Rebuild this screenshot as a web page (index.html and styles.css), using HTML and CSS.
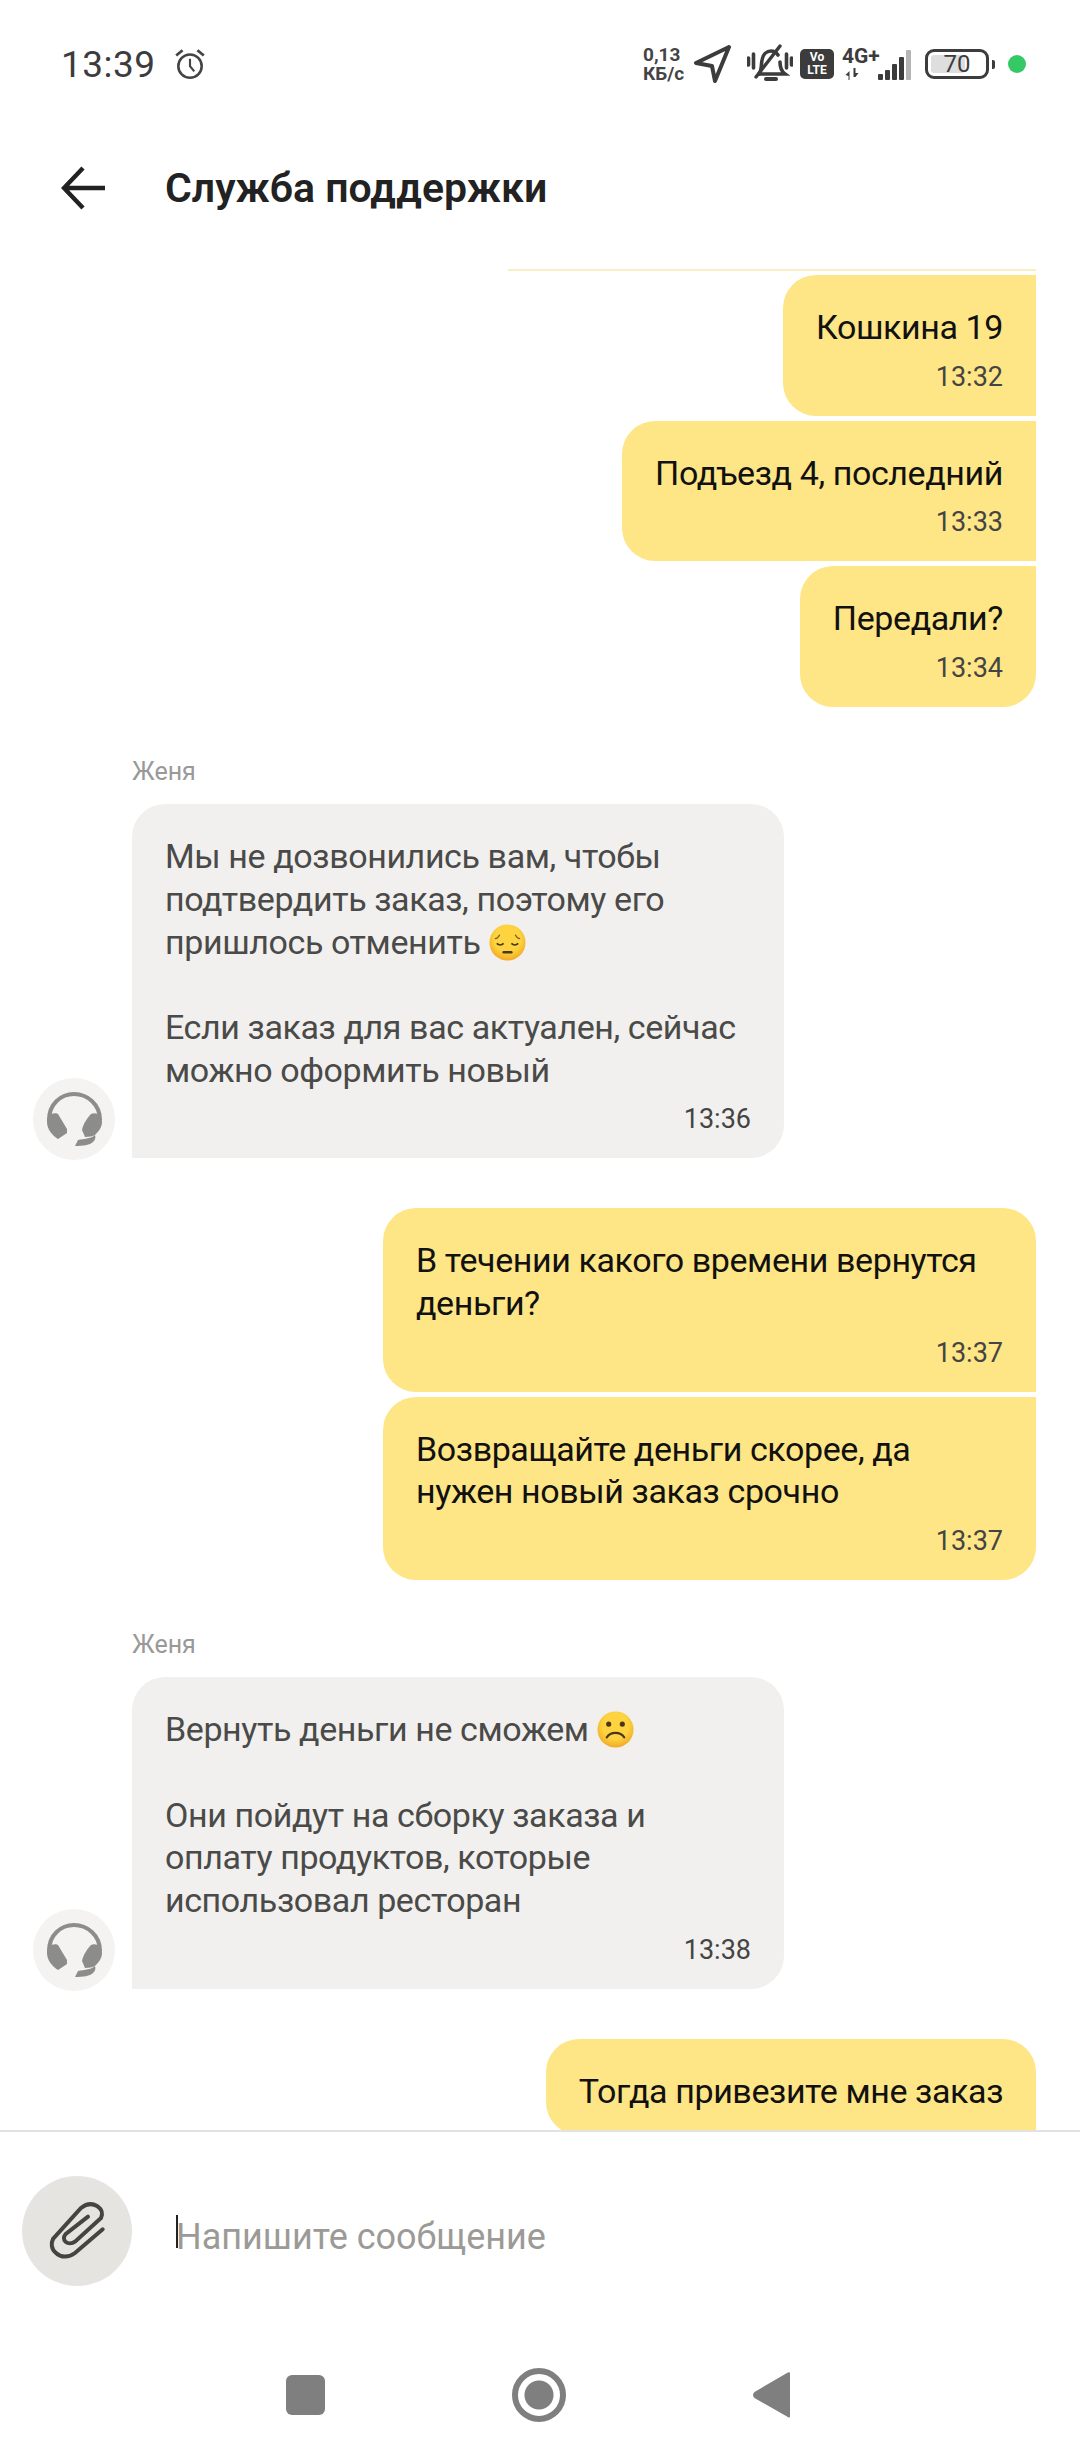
FILE: index.html
```html
<!DOCTYPE html>
<html lang="ru">

<head>
    <meta charset="UTF-8">
    <meta name="viewport" content="width=device-width, initial-scale=1.0">
    <title>Служба поддержки</title>
    <link rel="stylesheet" href="styles.css">
</head>

<body>
    <div class="page">
        <!-- Status bar -->
        <div class="status-bar">
            <div class="status-left">
                <span class="clock">13:39</span>
                <svg class="alarm" viewBox="0 0 32 32" fill="none" stroke="#444" stroke-width="2.4">
                    <circle cx="16" cy="18" r="11"></circle>
                    <path d="M16 11v7l4 5" stroke-width="2"></path>
                    <path d="M3 8l6-5M29 8l-6-5" stroke-width="2.6"></path>
                </svg>
            </div>
            <div class="status-right">
                <div class="speed"><span>0,13</span><span>КБ/с</span></div>
                <svg class="location" viewBox="0 0 38 38" fill="none" stroke="#3c3c3c" stroke-width="4" stroke-linejoin="round">
                    <path d="M35 2L2 18l16 3 3 15z"></path>
                </svg>
                <svg class="bell" viewBox="0 0 46 40" fill="none" stroke="#3c3c3c" stroke-width="3.6" stroke-linecap="round">
                    <path d="M12 30c3-4 2-9 3-14 1-6 5-9 9-9 3 0 5 1 7 4"></path>
                    <path d="M33 18c0 5 1 9 5 12H12"></path>
                    <path d="M33 2L9 33" stroke-width="3.4"></path>
                    <path d="M1.5 14v7M6.5 10v14M39.500 10v14M44.500 14v7"></path>
                    <path d="M19 35h10" stroke-width="4"></path>
                </svg>
                <div class="volte"><span>Vo</span><span>LTE</span></div>
                <div class="network">
                    <span class="net-type">4G+</span>
                    <div class="net-arrows">
                        <svg class="arrows" viewBox="0 0 14 12" fill="#3c3c3c">
                            <path d="M0 7l4-4v9H3V8zM8 0h2v5l3 0-3 4H8z"></path>
                        </svg>
                    </div>
                </div>
                <div class="signal">
                    <i class="bar bar-1"></i>
                    <i class="bar bar-2"></i>
                    <i class="bar bar-3"></i>
                    <i class="bar bar-4"></i>
                    <i class="bar bar-5"></i>
                </div>
                <div class="battery">
                    <div class="battery-body">
                        <div class="battery-level"></div>
                        <span class="battery-text">70</span>
                    </div>
                    <div class="battery-nub"></div>
                </div>
                <div class="dot"></div>
            </div>
        </div>

        <!-- Header -->
        <div class="header">
            <svg class="back" viewBox="0 0 44 44" fill="none" stroke="#222" stroke-width="4.4">
                <path d="M22 2L3 22l19 20M3 22h41"></path>
            </svg>
            <div class="title">Служба поддержки</div>
        </div>

        <!-- Chat -->
        <div class="chat">
            <div class="peek"></div>
            <div class="group group-out">
                <div class="bubble out flat-top">
                    <div class="text">Кошкина 19</div>
                    <div class="time">13:32</div>
                </div>
                <div class="bubble out flat-top">
                    <div class="text">Подъезд 4, последний</div>
                    <div class="time">13:33</div>
                </div>
                <div class="bubble out flat-top end">
                    <div class="text">Передали?</div>
                    <div class="time">13:34</div>
                </div>
            </div>

            <div class="group group-in">
                <div class="name">Женя</div>
                <div class="in-row">
                    <div class="avatar">
                        <svg viewBox="0 0 82 82">
                            <path d="M16 42C16 26 28 16 41 16S67 26 67 42" fill="none" stroke="#8c8c8a" stroke-width="4"></path>
                            <path class="ear" d="M14 44c0-5 2-8 4-8 3-1 6-1 7 0l9 15 0 4-9 6c-6-4-11-10-11-17z"></path>
                            <path class="ear" d="M69 44c0-5-2-8-4-8-3-1-5-1-7 0-3 3-8 10-9 16l3 7c4 0 8-1 10-2 4-4 7-8 7-13z"></path>
                            <path class="ear" d="M62 57c-3 3-10 4-17 5l-3 6c8 0 15-1 18-4 2-2 3-4 2-7z"></path>
                        </svg>
                    </div>
                    <div class="bubble in">
                        <div class="text">Мы не дозвонились вам, чтобы подтвердить заказ, поэтому его пришлось отменить
                            <svg class="emoji" viewBox="0 0 38 38">
                                <defs>
                                    <radialGradient id="skin" cx="50%" cy="40%" r="60%">
                                        <stop offset="0.6" stop-color="#fdd43f"></stop>
                                        <stop offset="1" stop-color="#f3a925"></stop>
                                    </radialGradient>
                                </defs>
                                <circle cx="19" cy="19" r="18.500" fill="url(#skin)"></circle>
                                <path d="M6 15c2 0 4-2 5-4M32 15c-2 0-4-2-5-4" fill="none" stroke="#7a5a20" stroke-width="1.400"></path>
                                <path d="M8 20c2 2 5 2 7 0M30 20c-2 2-5 2-7 0" fill="none" stroke="#4a3618" stroke-width="1.800"></path>
                                <path d="M15 29h8" stroke="#4a3618" stroke-width="2.400" stroke-linecap="round"></path>
                            </svg>
                        </div>
                        <div class="text gap-line">Если заказ для вас актуален, сейчас можно оформить новый</div>
                        <div class="time">13:36</div>
                    </div>
                </div>
            </div>

            <div class="group group-out">
                <div class="bubble out wide">
                    <div class="text">В течении какого времени вернутся деньги?</div>
                    <div class="time">13:37</div>
                </div>
                <div class="bubble out wide flat-top end">
                    <div class="text">Возвращайте деньги скорее, да нужен новый заказ срочно</div>
                    <div class="time">13:37</div>
                </div>
            </div>

            <div class="group group-in">
                <div class="name">Женя</div>
                <div class="in-row">
                    <div class="avatar">
                        <svg viewBox="0 0 82 82">
                            <path d="M16 42C16 26 28 16 41 16S67 26 67 42" fill="none" stroke="#8c8c8a" stroke-width="4"></path>
                            <path class="ear" d="M14 44c0-5 2-8 4-8 3-1 6-1 7 0l9 15 0 4-9 6c-6-4-11-10-11-17z"></path>
                            <path class="ear" d="M69 44c0-5-2-8-4-8-3-1-5-1-7 0-3 3-8 10-9 16l3 7c4 0 8-1 10-2 4-4 7-8 7-13z"></path>
                            <path class="ear" d="M62 57c-3 3-10 4-17 5l-3 6c8 0 15-1 18-4 2-2 3-4 2-7z"></path>
                        </svg>
                    </div>
                    <div class="bubble in">
                        <div class="text">Вернуть деньги не сможем
                            <svg class="emoji" viewBox="0 0 38 38">
                                <circle cx="19" cy="19" r="18.500" fill="url(#skin)"></circle>
                                <circle cx="12" cy="13.500" r="2.600" fill="#4a3618"></circle>
                                <circle cx="26" cy="13.500" r="2.600" fill="#4a3618"></circle>
                                <path d="M10 27c4-6 14-6 18 0" fill="none" stroke="#4a3618" stroke-width="2.200" stroke-linecap="round"></path>
                            </svg>
                        </div>
                        <div class="text gap-line">Они пойдут на сборку заказа и оплату продуктов, которые использовал ресторан</div>
                        <div class="time">13:38</div>
                    </div>
                </div>
            </div>

            <div class="group group-out">
                <div class="bubble out">
                    <div class="text">Тогда привезите мне заказ</div>
                </div>
            </div>
        </div>

        <!-- Composer -->
        <div class="composer">
            <div class="attach">
                <svg viewBox="0 0 110 110" fill="none" stroke="#444441" stroke-width="4" stroke-linecap="round">
                    <path d="M80.700 53.300L53 77c-6 4.500-14 5-19 0-5-4-5-10-3-14l28-31c5-4 11-5 16-2 5 3 6 8 4 12L53 65.700c-3 2-7 2-9.500 0-2-2-2-5 0-7.500l22.500-17.500"></path>
                </svg>
            </div>
            <div class="input">
                <span class="caret"></span>
                <span class="placeholder">Напишите сообщение</span>
            </div>
        </div>

        <!-- Navigation bar -->
        <div class="nav-bar">
            <div class="nav-square"></div>
            <div class="nav-circle"></div>
            <svg class="nav-back" viewBox="0 0 38 46" fill="#7f7f7f">
                <path d="M37 1.500V44c0 2-1.500 2-3 .5L1.500 26c-2-2-2-4 0-6L34 1c2-1.200 3-.7 3 .5z"></path>
            </svg>
        </div>
    </div>
</body>

</html>
```

FILE: styles.css
```css
body {
    margin: 0;
    padding: 0;
    background: white;
    font-family: Roboto, "Noto Sans", sans-serif;
    overflow: hidden;
}

.page {
    width: 1080px;
    height: 2460px;
    display: flex;
    flex-direction: column;
    overflow: hidden;
}

/* Status bar */

.status-bar {
    height: 128px;
    flex: none;
    display: flex;
    justify-content: space-between;
    align-items: center;
    padding: 0 54px 0 61px;
}

.status-left {
    display: flex;
    align-items: center;
    gap: 17px;
}

.clock {
    font-size: 37px;
    color: #3c3c3c;
    letter-spacing: 0.5px;
}

.alarm {
    width: 34px;
    height: 34px;
}

.status-right {
    display: flex;
    align-items: center;
}

.speed {
    display: flex;
    flex-direction: column;
    font-size: 19px;
    line-height: 19px;
    font-weight: 700;
    color: #444;
    width: 51px;
}

.location {
    width: 38px;
    height: 38px;
}

.bell {
    width: 46px;
    height: 40px;
    margin-left: 15px;
}

.volte {
    width: 34px;
    height: 30px;
    margin-left: 7px;
    background: #3c3c3c;
    border-radius: 5px;
    color: white;
    font-size: 12px;
    line-height: 13px;
    font-weight: 700;
    display: flex;
    flex-direction: column;
    align-items: center;
    justify-content: center;
}

.network {
    width: 50px;
    margin-left: 8px;
    display: flex;
    flex-direction: column;
    gap: 4px;
}

.net-type {
    font-size: 21px;
    line-height: 16px;
    font-weight: 700;
    color: #3c3c3c;
}

.net-arrows {
    display: flex;
    padding-left: 3px;
}

.arrows {
    width: 15px;
    height: 12px;
}

.signal {
    display: flex;
    align-items: flex-end;
    gap: 2px;
    height: 31px;
    margin-left: -14px;
    width: 34px;
}

.bar {
    width: 5px;
    background: #3c3c3c;
    border-radius: 1px;
}

.bar-1 { height: 6px; }
.bar-2 { height: 10px; }
.bar-3 { height: 16px; }
.bar-4 { height: 23px; }
.bar-5 { height: 30px; background: #b5b5b5; }

.battery {
    display: flex;
    align-items: center;
    gap: 3px;
    margin-left: 13px;
}

.battery-body {
    position: relative;
    width: 64px;
    height: 30px;
    box-sizing: border-box;
    border: 3px solid #3c3c3c;
    border-radius: 9px;
    display: flex;
    align-items: center;
    justify-content: center;
}

.battery-level {
    position: absolute;
    left: 3px;
    top: 3px;
    bottom: 3px;
    width: 58%;
    background: #dedede;
    border-radius: 3px;
}

.battery-text {
    position: relative;
    font-size: 24px;
    color: #3c3c3c;
}

.battery-nub {
    width: 3px;
    height: 9px;
    background: #3c3c3c;
    border-radius: 0 2px 2px 0;
}

.dot {
    width: 18px;
    height: 18px;
    margin-left: 13px;
    border-radius: 50%;
    background: #34c964;
}

/* Header */

.header {
    height: 120px;
    flex: none;
    display: flex;
    align-items: center;
    gap: 60px;
    padding-left: 61px;
}

.back {
    width: 44px;
    height: 44px;
}

.title {
    font-size: 41px;
    font-weight: 600;
    color: #222;
}

/* Chat */

.chat {
    flex: 1;
    min-height: 0;
    overflow: hidden;
    padding: 21px 44px 0 0;
    display: flex;
    flex-direction: column;
}

.peek {
    flex: none;
    align-self: flex-end;
    width: 528px;
    height: 2px;
    margin-bottom: 4px;
    background: #f8eec2;
}

.group {
    display: flex;
    flex-direction: column;
    flex: none;
    gap: 5px;
}

.group-out {
    align-items: flex-end;
}

.group-in {
    margin-top: 49px;
    gap: 0;
}

.group-in + .group-out {
    margin-top: 50px;
}

.bubble {
    box-sizing: border-box;
    padding: 31px 33px 23px;
    flex: none;
}

.out {
    background: #fee585;
    color: #111;
    border-radius: 33px 33px 0 33px;
}

.flat-top {
    border-top-right-radius: 0;
}

.end {
    border-bottom-right-radius: 33px;
}

.wide {
    width: 653px;
}

.in {
    width: 652px;
    background: #f1f0ee;
    color: #4a4a48;
    border-radius: 33px 33px 33px 0;
}

.text {
    font-size: 34px;
    line-height: 42.7px;
    letter-spacing: -0.4px;
}

.gap-line {
    margin-top: 42.7px;
}

.time {
    margin-top: 12px;
    font-size: 27px;
    line-height: 32px;
    text-align: right;
    color: #444;
}

.name {
    margin-left: 132px;
    margin-bottom: 16px;
    font-size: 25px;
    line-height: 32px;
    color: #999;
}

.in-row {
    display: flex;
    align-items: flex-end;
    gap: 17px;
    padding-left: 33px;
}

.avatar {
    width: 82px;
    height: 82px;
    flex: none;
    margin-bottom: -2px;
    border-radius: 50%;
    background: #f4f3f1;
}

.avatar svg {
    display: block;
    width: 82px;
    height: 82px;
}

.ear {
    fill: #8c8c8a;
}

.emoji {
    width: 37px;
    height: 37px;
    vertical-align: -7px;
}

/* Composer */

.composer {
    flex: none;
    border-top: 2px solid #e2e2e0;
    padding: 44px 0 0 22px;
    display: flex;
    gap: 44px;
}

.attach {
    width: 110px;
    height: 110px;
    border-radius: 50%;
    background: #e5e4e0;
}

.attach svg {
    display: block;
    width: 110px;
    height: 110px;
}

.input {
    position: relative;
    flex: 1;
    padding-top: 41px;
}

.caret {
    position: absolute;
    left: 0;
    top: 39px;
    width: 2px;
    height: 33px;
    background: #222;
}

.placeholder {
    font-size: 36px;
    line-height: 40px;
    color: #9c9a96;
}

/* Navigation bar */

.nav-bar {
    flex: none;
    display: flex;
    justify-content: center;
    align-items: center;
    gap: 187px;
    padding: 82px 3px 38px 0;
    height: 54px;
}

.nav-square {
    width: 39px;
    height: 40px;
    background: #7f7f7f;
    border-radius: 6px;
}

.nav-circle {
    box-sizing: border-box;
    width: 54px;
    height: 54px;
    border: 6px solid #7f7f7f;
    border-radius: 50%;
    background: radial-gradient(circle, #7f7f7f 0 14px, white 15px);
}

.nav-back {
    width: 38px;
    height: 46px;
}
```
